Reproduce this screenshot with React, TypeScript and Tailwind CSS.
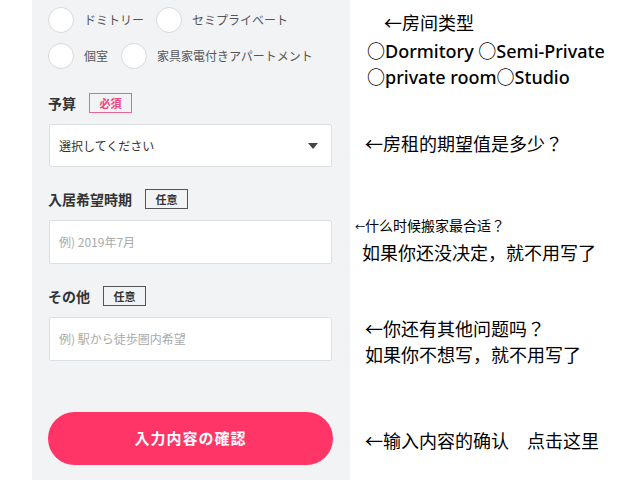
import { ReactNode } from "react";

const jp = { fontFamily: '"Noto Sans CJK JP", "Noto Sans", sans-serif' };
const latin = { fontFamily: '"Noto Sans", "Noto Sans CJK SC", sans-serif' };
const zh = { fontFamily: '"Noto Sans CJK SC", "Noto Sans", sans-serif' };

function Radio({ label }: { label: string }) {
  return (
    <div className="flex items-center gap-[10px]">
      <span className="size-[26px] shrink-0 rounded-full border border-[#d9d9d9] bg-white" />
      <span className="text-[12px] text-[#555]">{label}</span>
    </div>
  );
}

function FieldLabel({ text, required }: { text: string; required?: boolean }) {
  return (
    <div className="flex h-5 items-center gap-[13px]">
      <span className="text-[14px] leading-5 font-bold text-[#333]">{text}</span>
      {required ? (
        <span className="flex h-[20px] w-[43px] items-center justify-center border border-[#f0658f] text-[11px] font-bold text-[#f0457a]">
          必須
        </span>
      ) : (
        <span className="flex h-[20px] w-[43px] items-center justify-center border border-[#555] text-[11px] font-bold text-[#333]">
          任意
        </span>
      )}
    </div>
  );
}

function Box({ children, tall }: { children: ReactNode; tall?: boolean }) {
  return (
    <div
      className={
        "ml-px flex w-[283px] items-center justify-between rounded-[2px] border border-[#dcdfe3] bg-white pl-[9px] pr-[13px] " +
        (tall ? "h-[44px]" : "h-[43px]")
      }
    >
      {children}
    </div>
  );
}

function Note({ children, className }: { children: ReactNode; className?: string }) {
  return (
    <div style={zh} className={"text-[18px] leading-[26px] text-black " + (className ?? "")}>
      {children}
    </div>
  );
}

// full-width question mark, centred as in the JP face
const Q = () => <span style={jp}>？</span>;

export default function App() {
  return (
    <div className="flex h-[480px] w-[640px] overflow-hidden bg-white">
      <div style={jp} className="ml-[32px] flex h-full w-[318px] shrink-0 flex-col bg-[#f2f3f5] px-4 pt-[7px]">
        <div className="flex gap-[12px]">
          <Radio label="ドミトリー" />
          <Radio label="セミプライベート" />
        </div>
        <div className="mt-[10px] flex gap-[13px]">
          <Radio label="個室" />
          <Radio label="家具家電付きアパートメント" />
        </div>

        <div className="mt-[24px]">
          <FieldLabel text="予算" required />
        </div>
        <div className="mt-[11px]">
          <Box>
            <span className="text-[12px] text-[#333]">選択してください</span>
            <span className="h-0 w-0 border-x-[5px] border-t-[6px] border-x-transparent border-t-[#444]" />
          </Box>
        </div>

        <div className="mt-[22px]">
          <FieldLabel text="入居希望時期" />
        </div>
        <div className="mt-[11px]">
          <Box tall>
            <span className="text-[12px] text-[#aaa]">例) 2019年7月</span>
          </Box>
        </div>

        <div className="mt-[22px]">
          <FieldLabel text="その他" />
        </div>
        <div className="mt-[11px]">
          <Box tall>
            <span className="text-[12px] text-[#aaa]">例) 駅から徒歩圏内希望</span>
          </Box>
        </div>

        <button className="mt-[51px] flex h-[53px] w-[285px] items-center justify-center rounded-full bg-[#ff3567] text-[15px] font-bold tracking-[1px] text-white">
          入力内容の確認
        </button>
      </div>

      <div className="flex flex-col pt-[9px]">
        <Note className="ml-[34px]">←房间类型</Note>
        <div style={latin} className="ml-[17px] mt-[3px] text-[18px] leading-[26px] font-medium text-black">
          ○Dormitory ○Semi-Private
        </div>
        <div style={latin} className="ml-[17px] text-[18px] leading-[26px] font-medium text-black">
          ○private room○Studio
        </div>
        <Note className="ml-[15px] mt-[40px]">
          ←房租的期望值是多少<Q />
        </Note>
        <div style={zh} className="ml-[5px] mt-[59px] text-[14px] leading-[20px] text-black">
          <span className="text-[10px]">←</span>什么时候搬家最合适<Q />
        </div>
        <Note className="ml-[12px] mt-[2px]">如果你还没决定，就不用写了</Note>
        <Note className="ml-[15px] mt-[50px]">
          ←你还有其他问题吗<Q />
        </Note>
        <Note className="ml-[15px]">如果你不想写，就不用写了</Note>
        <Note className="ml-[15px] mt-[60px]">←输入内容的确认　点击这里</Note>
      </div>
    </div>
  );
}
